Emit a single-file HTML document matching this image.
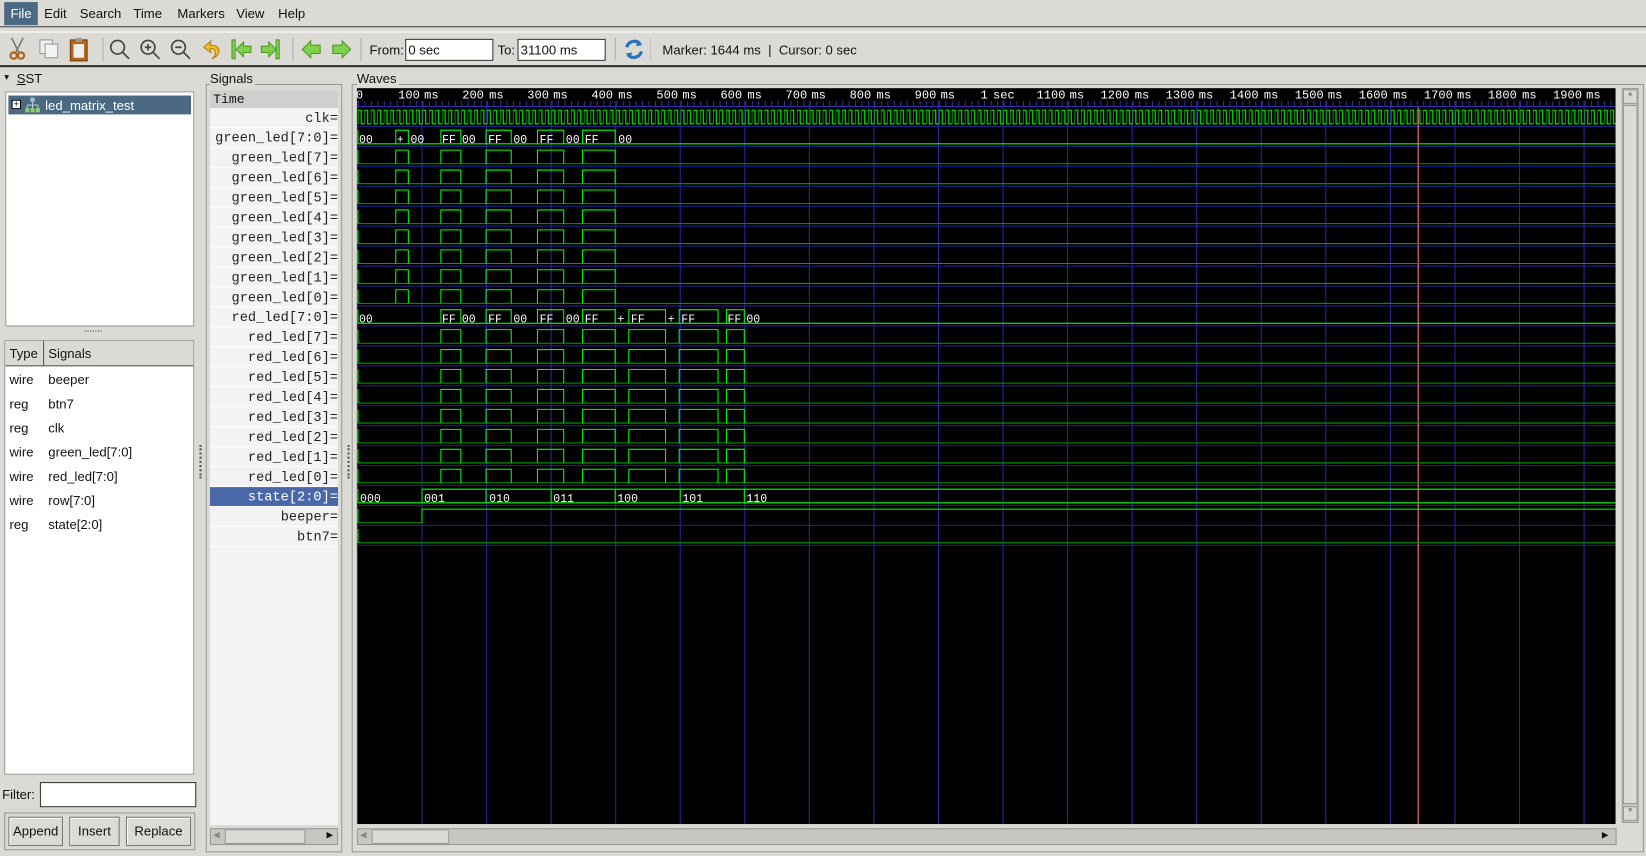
<!DOCTYPE html>
<html><head><meta charset="utf-8"><style>
*{margin:0;padding:0;box-sizing:border-box}
html,body{width:1646px;height:855px;overflow:hidden;background:#dcdad5}
#w{position:absolute;left:0;top:0;width:1568px;height:815px;transform:scale(1.04974);transform-origin:0 0;font-family:"Liberation Sans",sans-serif;font-size:12.5px;color:#111}
.a{position:absolute}
.menu span{position:absolute;top:6px}
.box{position:absolute;border:1px solid #9a9893;background:#fff}
.mono{font-family:"Liberation Mono",monospace}
.sig{position:absolute;left:200px;width:122px;height:19px;text-align:right;padding-right:0;font-size:13px;line-height:20px;border-bottom:1px solid #fff;background:#f3f3f3;color:#222;white-space:pre;overflow:hidden}
.btn{position:absolute;top:778px;height:28px;border:1px solid #7a7873;background:#dcdad5;text-align:center;line-height:26px;box-shadow:inset 1px 1px #fff}
</style></head><body><div id="w">
<div class="a" style="left:0;top:0;width:1568px;height:26px;background:#dcdad5;border-bottom:1px solid #444"></div>
<div class="a" style="left:4px;top:2px;width:32px;height:22px;background:#4b6983"></div>
<div class="menu">
<span style="left:10px;color:#fff">File</span><span style="left:42px">Edit</span><span style="left:76px">Search</span><span style="left:127px">Time</span><span style="left:169px">Markers</span><span style="left:225px">View</span><span style="left:265px">Help</span></div>
<div class="a" style="left:0;top:30px;width:1568px;height:34px;border-top:1px solid #fff;border-bottom:2px solid #333"></div>
<svg class="a" style="left:0;top:30px" width="620" height="34">
<g stroke="#777" stroke-width="1.5" fill="none"><path d="M11 6 L18 20 M22 6 L15 20"/></g>
<circle cx="13" cy="23" r="3" fill="none" stroke="#b06010" stroke-width="2"/><circle cx="20" cy="23" r="3" fill="none" stroke="#b06010" stroke-width="2"/>
<rect x="38" y="8" width="12" height="13" fill="#eee" stroke="#999"/><rect x="43" y="12" width="12" height="13" fill="#f4f4f4" stroke="#999"/>
<rect x="67" y="8" width="16" height="20" fill="#b8651a" stroke="#6b3a0c"/><rect x="70" y="12" width="10" height="13" fill="#eee"/><rect x="72" y="6" width="6" height="4" fill="#999"/>
<line x1="98" y1="6" x2="98" y2="28" stroke="#aaa"/>
<g fill="none" stroke="#444" stroke-width="1.6"><circle cx="112" cy="15" r="6.5"/><path d="M117 20 L123 26"/><circle cx="141" cy="15" r="6.5"/><path d="M146 20 L152 26 M138 15 H144 M141 12 V18"/><circle cx="170" cy="15" r="6.5"/><path d="M175 20 L181 26 M167 15 H173"/></g>
<path d="M202 26 C212 22 210 12 200 13 L201 9 L194 15 L201 20 L200 16 C206 16 207 22 202 26Z" fill="#f0c020" stroke="#b08010"/>
<g fill="#7ed04a" stroke="#4a9a20"><rect x="221" y="8" width="3" height="18"/><path d="M225 17 L232 10 V14 H239 V20 H232 V24Z"/><rect x="263" y="8" width="3" height="18"/><path d="M263 17 L256 10 V14 H249 V20 H256 V24Z"/>
<path d="M288 17 L296 9 V13 H305 V21 H296 V25Z"/><path d="M334 17 L326 9 V13 H317 V21 H326 V25Z"/></g>
<line x1="279" y1="6" x2="279" y2="28" stroke="#aaa"/><line x1="344" y1="6" x2="344" y2="28" stroke="#aaa"/><line x1="586" y1="6" x2="586" y2="28" stroke="#aaa"/><line x1="620" y1="6" x2="620" y2="28" stroke="#aaa"/>
<path d="M597 15 A7.5 7.5 0 0 1 610 12 M611 19 A7.5 7.5 0 0 1 598 22" fill="none" stroke="#2a70c0" stroke-width="3"/>
<path d="M607 9 L612 13 L606 14Z M601 25 L596 21 L602 20Z" fill="#2a70c0"/>
</svg>
<span class="a" style="left:352px;top:41px">From:</span>
<div class="box" style="left:386px;top:37px;width:84px;height:21px;border-color:#333;padding:3px 2px">0 sec</div>
<span class="a" style="left:474px;top:41px">To:</span>
<div class="box" style="left:493px;top:37px;width:84px;height:21px;border-color:#333;padding:3px 2px">31100 ms</div>
<span class="a" style="left:631px;top:41px">Marker: 1644 ms &nbsp;|&nbsp; Cursor: 0 sec</span>
<span class="a" style="left:4px;top:68px;font-size:9px">▾</span><span class="a" style="left:16px;top:68px"><u>S</u>ST</span>
<div class="box" style="left:5px;top:87px;width:180px;height:224px"></div>
<div class="a" style="left:8px;top:91px;width:174px;height:18px;background:#4b6983"></div>
<div class="a" style="left:11px;top:95px;width:9px;height:9px;border:1px solid #000;background:#fff;font-size:9px;line-height:7px;text-align:center">+</div>
<svg class="a" style="left:23px;top:92px" width="16" height="16"><rect x="6" y="1" width="4" height="4" fill="#9bc0e8"/><path d="M8 5V8M3 8H13M3 8V11M8 8V11M13 8V11" stroke="#ccc" fill="none"/><rect x="1" y="11" width="4" height="4" fill="#8dd070"/><rect x="6" y="11" width="4" height="4" fill="#8dd070"/><rect x="11" y="11" width="4" height="4" fill="#8dd070"/></svg>
<span class="a" style="left:43px;top:94px;color:#fff">led_matrix_test</span>
<span class="a" style="left:80px;top:308px;font-size:9px">.......</span>
<div class="box" style="left:4px;top:324px;width:181px;height:414px"></div>
<div class="a" style="left:5px;top:325px;width:179px;height:24px;background:#dcdad5;border-bottom:1px solid #555"></div>
<div class="a" style="left:41px;top:325px;width:1px;height:24px;background:#555"></div>
<span class="a" style="left:9px;top:330px">Type</span><span class="a" style="left:46px;top:330px">Signals</span>
<div class="a" style="left:9px;top:351px;line-height:23px">wire<br>reg<br>reg<br>wire<br>wire<br>wire<br>reg</div>
<div class="a" style="left:46px;top:351px;line-height:23px">beeper<br>btn7<br>clk<br>green_led[7:0]<br>red_led[7:0]<br>row[7:0]<br>state[2:0]</div>
<span class="a" style="left:2px;top:750px">Filter:</span>
<div class="box" style="left:38px;top:745px;width:149px;height:24px;border-color:#333"></div>
<div class="a" style="left:4px;top:774px;width:182px;height:36px;border:1px solid #9a9893"></div>
<div class="btn" style="left:8px;width:52px">Append</div><div class="btn" style="left:66px;width:48px">Insert</div><div class="btn" style="left:120px;width:62px">Replace</div>
<div class="a" style="left:190px;top:424px;width:2px;height:32px;border-left:2px dotted #555"></div>
<div class="a" style="left:331px;top:424px;width:2px;height:32px;border-left:2px dotted #555"></div>
<div class="a" style="left:196px;top:80px;width:130px;height:732px;border:1px solid #9a9893"></div>
<span class="a" style="left:200px;top:68px;background:#dcdad5;padding-right:2px">Signals</span>
<div class="a" style="left:200px;top:86px;width:122px;height:700px;background:#f3f3f3"></div>
<div class="a mono" style="left:200px;top:86px;width:122px;height:17px;background:#cfcfcf;padding-left:3px;line-height:19px;font-size:12.5px">Time</div>
<div class="sig mono" style="top:103px">clk=</div>
<div class="sig mono" style="top:122px">green_led[7:0]=</div>
<div class="sig mono" style="top:141px">green_led[7]=</div>
<div class="sig mono" style="top:160px">green_led[6]=</div>
<div class="sig mono" style="top:179px">green_led[5]=</div>
<div class="sig mono" style="top:198px">green_led[4]=</div>
<div class="sig mono" style="top:217px">green_led[3]=</div>
<div class="sig mono" style="top:236px">green_led[2]=</div>
<div class="sig mono" style="top:255px">green_led[1]=</div>
<div class="sig mono" style="top:274px">green_led[0]=</div>
<div class="sig mono" style="top:293px">red_led[7:0]=</div>
<div class="sig mono" style="top:312px">red_led[7]=</div>
<div class="sig mono" style="top:331px">red_led[6]=</div>
<div class="sig mono" style="top:350px">red_led[5]=</div>
<div class="sig mono" style="top:369px">red_led[4]=</div>
<div class="sig mono" style="top:388px">red_led[3]=</div>
<div class="sig mono" style="top:407px">red_led[2]=</div>
<div class="sig mono" style="top:426px">red_led[1]=</div>
<div class="sig mono" style="top:445px">red_led[0]=</div>
<div class="sig mono" style="top:464px;background:#4a68a8;color:#fff">state[2:0]=</div>
<div class="sig mono" style="top:483px">beeper=</div>
<div class="sig mono" style="top:502px">btn7=</div>
<div class="a" style="left:200px;top:789px;width:122px;height:16px;background:#c8c6c0;border:1px solid #999"></div>
<div class="a" style="left:214px;top:790px;width:77px;height:14px;background:#dcdad5;border:1px solid #999"></div>
<span class="a" style="left:203px;top:791px;font-size:8px;color:#888">◀</span><span class="a" style="left:311px;top:791px;font-size:8px">▶</span>
<div class="a" style="left:335px;top:80px;width:1231px;height:732px;border:1px solid #9a9893"></div>
<span class="a" style="left:340px;top:68px;background:#dcdad5;padding-right:2px">Waves</span>
<div class="a" style="left:1545px;top:84px;width:16px;height:700px;background:#c8c6c0;border:1px solid #999"></div>
<div class="a" style="left:1546px;top:85px;width:14px;height:14px;background:#dcdad5;border:1px solid #999;font-size:7px;text-align:center;color:#888">▲</div>
<div class="a" style="left:1546px;top:100px;width:14px;height:666px;background:#dcdad5;border:1px solid #999"></div>
<div class="a" style="left:1546px;top:768px;width:14px;height:14px;background:#dcdad5;border:1px solid #999;font-size:7px;text-align:center;color:#888">▼</div>
<div class="a" style="left:340px;top:789px;width:1200px;height:16px;background:#c8c6c0;border:1px solid #999"></div>
<div class="a" style="left:354px;top:790px;width:74px;height:14px;background:#dcdad5;border:1px solid #999"></div>
<span class="a" style="left:343px;top:791px;font-size:8px;color:#888">◀</span><span class="a" style="left:1526px;top:791px;font-size:8px">▶</span>
<svg class="a" style="left:0;top:0" width="1568" height="815">
<defs>
<pattern id="clk" x="341" y="103" width="6.15" height="16" patternUnits="userSpaceOnUse"><path d="M0 15V2H3.075V15H6.15" stroke="#00ff00" fill="none" stroke-width="1"/></pattern>
<pattern id="tk" x="341" y="96" width="6.15" height="6" patternUnits="userSpaceOnUse"><path d="M0.5 0V5" stroke="#3030a0" stroke-width="1"/></pattern>
<pattern id="vg" x="341" y="0" width="61.5" height="10" patternUnits="userSpaceOnUse"><path d="M61 0V10" stroke="#2828a0" stroke-width="1"/></pattern>
<pattern id="hg" x="0" y="102" width="10" height="19" patternUnits="userSpaceOnUse"><path d="M0 18.5H10" stroke="#20208a" stroke-width="1"/></pattern>
<g id="gb"><path d="M341 156H1539" stroke="#00a000"/><path d="M341 143V156M377 156V143H389V156M420 156V143H439V156M463 156V143H487V156M512 156V143H537V156M555 156V143H586V156" stroke="#00ff00" fill="none"/></g>
<g id="rb"><path d="M341 327H1539" stroke="#00a000"/><path d="M341 314V327M420 327V314H439V327M463 327V314H487V327M512 327V314H537V327M555 327V314H586V327M599 327V314H634V327M647 327V314H684V327M692 327V314H709V327" stroke="#00ff00" fill="none"/></g>
</defs>
<rect x="340" y="84" width="1199" height="701" fill="#000"/>
<rect x="340" y="96" width="1199" height="6" fill="url(#tk)"/>
<path d="M340 101.5H1539" stroke="#3030a0"/>
<rect x="340" y="96" width="1199" height="689" fill="url(#vg)"/>
<rect x="340" y="102" width="1199" height="419" fill="url(#hg)"/>
<path d="M1351 102V785" stroke="#ff8080"/>
<rect x="341" y="103" width="1198" height="17" fill="url(#clk)"/>
<g fill="#fff" font-family="Liberation Mono,monospace" font-size="11.5">
<text x="339" y="94">0</text>
<text x="400" y="94" text-anchor="end">100</text><text x="404" y="94">ms</text>
<text x="461" y="94" text-anchor="end">200</text><text x="466" y="94">ms</text>
<text x="523" y="94" text-anchor="end">300</text><text x="527" y="94">ms</text>
<text x="584" y="94" text-anchor="end">400</text><text x="589" y="94">ms</text>
<text x="646" y="94" text-anchor="end">500</text><text x="650" y="94">ms</text>
<text x="707" y="94" text-anchor="end">600</text><text x="712" y="94">ms</text>
<text x="769" y="94" text-anchor="end">700</text><text x="773" y="94">ms</text>
<text x="830" y="94" text-anchor="end">800</text><text x="835" y="94">ms</text>
<text x="892" y="94" text-anchor="end">900</text><text x="896" y="94">ms</text>
<text x="941" y="94" text-anchor="end">1</text><text x="946" y="94">sec</text>
<text x="1015" y="94" text-anchor="end">1100</text><text x="1019" y="94">ms</text>
<text x="1076" y="94" text-anchor="end">1200</text><text x="1081" y="94">ms</text>
<text x="1138" y="94" text-anchor="end">1300</text><text x="1142" y="94">ms</text>
<text x="1199" y="94" text-anchor="end">1400</text><text x="1204" y="94">ms</text>
<text x="1261" y="94" text-anchor="end">1500</text><text x="1265" y="94">ms</text>
<text x="1322" y="94" text-anchor="end">1600</text><text x="1327" y="94">ms</text>
<text x="1384" y="94" text-anchor="end">1700</text><text x="1388" y="94">ms</text>
<text x="1445" y="94" text-anchor="end">1800</text><text x="1450" y="94">ms</text>
<text x="1507" y="94" text-anchor="end">1900</text><text x="1511" y="94">ms</text>
</g>
<path d="M341 137H1539M341 124V137M377 137V124H389V137M420 137V124H439V137M463 137V124H487V137M512 137V124H537V137M555 137V124H586V137" stroke="#00ff00" fill="none"/>
<use href="#gb"/><use href="#gb" y="19"/><use href="#gb" y="38"/><use href="#gb" y="57"/><use href="#gb" y="76"/><use href="#gb" y="95"/><use href="#gb" y="114"/><use href="#gb" y="133"/>
<path d="M341 308H1539M341 295V308M420 308V295H439V308M463 308V295H487V308M512 308V295H537V308M555 308V295H586V308M599 308V295H634V308M647 308V295H684V308M692 308V295H709V308M586 295V308M634 295V308" stroke="#00ff00" fill="none"/>
<use href="#rb"/><use href="#rb" y="19"/><use href="#rb" y="38"/><use href="#rb" y="57"/><use href="#rb" y="76"/><use href="#rb" y="95"/><use href="#rb" y="114"/><use href="#rb" y="133"/>
<path d="M341 479H1539M402 466H1539M341 466V479M402 466V479M463 466V479M525 466V479M586 466V479M648 466V479M709 466V479" stroke="#00ff00" fill="none"/>
<path d="M341 498H402M341 517H1539" stroke="#00a000"/>
<path d="M341 485V498M402 498V485H1539M341 504V517" stroke="#00ff00" fill="none"/>
<g fill="#fff" font-family="Liberation Mono,monospace" font-size="11">
<text x="342" y="136">00</text><text x="378" y="136">+</text><text x="391" y="136">00</text><text x="421" y="136">FF</text><text x="440" y="136">00</text><text x="465" y="136">FF</text><text x="489" y="136">00</text><text x="514" y="136">FF</text><text x="539" y="136">00</text><text x="557" y="136">FF</text><text x="589" y="136">00</text>
<text x="342" y="307">00</text><text x="421" y="307">FF</text><text x="440" y="307">00</text><text x="465" y="307">FF</text><text x="489" y="307">00</text><text x="514" y="307">FF</text><text x="539" y="307">00</text><text x="557" y="307">FF</text><text x="588" y="307">+</text><text x="601" y="307">FF</text><text x="636" y="307">+</text><text x="649" y="307">FF</text><text x="693" y="307">FF</text><text x="711" y="307">00</text>
<text x="343" y="478">000</text><text x="404" y="478">001</text><text x="466" y="478">010</text><text x="527" y="478">011</text><text x="588" y="478">100</text><text x="650" y="478">101</text><text x="711" y="478">110</text>
</g>
</svg>
</div></body></html>
